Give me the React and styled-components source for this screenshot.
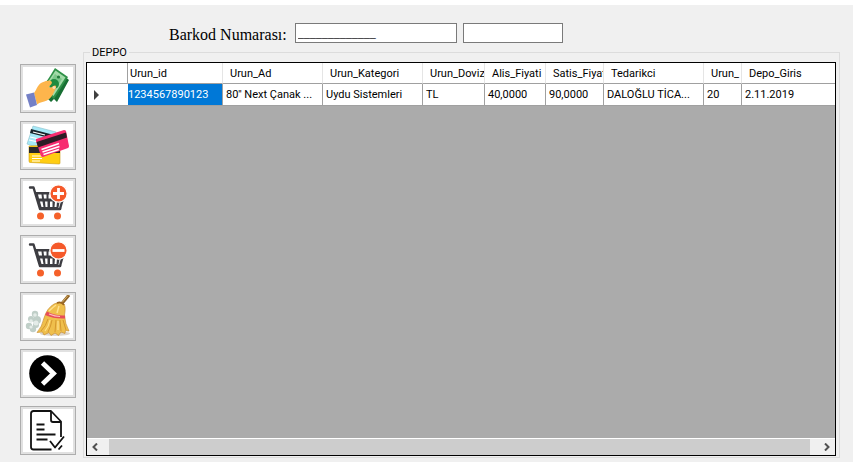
import React, { useState } from "react";
import styled, { createGlobalStyle } from "styled-components";

const columns = [
  { name: "Urun_id", width: 95 },
  { name: "Urun_Ad", width: 100 },
  { name: "Urun_Kategori", width: 100 },
  { name: "Urun_Doviz", width: 62 },
  { name: "Alis_Fiyati", width: 61 },
  { name: "Satis_Fiyat", width: 58 },
  { name: "Tedarikci", width: 100 },
  { name: "Urun_", width: 38 },
  { name: "Depo_Giris" },
];

const rows = [
  [
    "1234567890123",
    "80'' Next Çanak ...",
    "Uydu Sistemleri",
    "TL",
    "40,0000",
    "90,0000",
    "DALOĞLU TİCA...",
    "20",
    "2.11.2019",
  ],
];

const actions = [
  { label: "Nakit", Icon: CashIcon },
  { label: "Kredi kartı", Icon: CardsIcon },
  { label: "Sepete ekle", Icon: CartAddIcon },
  { label: "Sepetten çıkar", Icon: CartRemoveIcon },
  { label: "Temizle", Icon: BroomIcon },
  { label: "İleri", Icon: NextIcon },
  { label: "Onayla", Icon: DocumentIcon },
];

export default function App() {
  const [barcode, setBarcode] = useState("_____________");
  const [amount, setAmount] = useState("");

  return (
    <>
      <GlobalStyle />
      <Page>
        <SearchBar>
          <SearchLabel htmlFor="barcode">Barkod Numarası:</SearchLabel>
          <TextBox
            id="barcode"
            $width={162}
            value={barcode}
            onChange={(e) => setBarcode(e.target.value)}
          />
          <TextBox
            aria-label="Adet"
            $width={100}
            value={amount}
            onChange={(e) => setAmount(e.target.value)}
          />
        </SearchBar>
        <Content>
          <Sidebar>
            {actions.map(({ label, Icon }) => (
              <ActionButton key={label} type="button" aria-label={label}>
                <Icon />
              </ActionButton>
            ))}
          </Sidebar>
          <GroupBox>
            <GroupTitle>DEPPO</GroupTitle>
            <GridView>
              <GridBody>
                <Table>
                  <colgroup>
                    <Col $width={41} />
                    {columns.map((column) => (
                      <Col key={column.name} $width={column.width} />
                    ))}
                  </colgroup>
                  <thead>
                    <tr>
                      <CornerCell />
                      {columns.map((column) => (
                        <HeaderCell key={column.name} scope="col">
                          {column.name}
                        </HeaderCell>
                      ))}
                    </tr>
                  </thead>
                  <tbody>
                    {rows.map((row) => (
                      <tr key={row[0]}>
                        <RowMarker>
                          <svg width="5" height="10" viewBox="0 0 5 10">
                            <path d="M0 0L5 5L0 10Z" fill="#404040" />
                          </svg>
                        </RowMarker>
                        {row.map((value, index) => (
                          <Cell key={index} $selected={index === 0}>
                            {value}
                          </Cell>
                        ))}
                      </tr>
                    ))}
                  </tbody>
                </Table>
              </GridBody>
              <ScrollBar>
                <ScrollButton type="button" aria-label="Sola kaydır">
                  <svg width="6" height="8" viewBox="0 0 6 8">
                    <path d="M5 0.5L1.5 4L5 7.5" />
                  </svg>
                </ScrollButton>
                <ScrollThumb />
                <ScrollButton type="button" aria-label="Sağa kaydır" $end>
                  <svg width="6" height="8" viewBox="0 0 6 8">
                    <path d="M1 0.5L4.5 4L1 7.5" />
                  </svg>
                </ScrollButton>
              </ScrollBar>
            </GridView>
          </GroupBox>
        </Content>
      </Page>
    </>
  );
}

function CashIcon() {
  return (
    <Picture viewBox="0 0 50 43">
      <path d="M34 3L46 13L34 35L31 32L28 35L24 31L20 18Z" fill="#176f33" />
      <path d="M32 1L45 10L31 32L19 22Z" fill="#2f9148" />
      <path d="M32.500 3.500L42.500 10.500L30.500 29L21 21Z" fill="#a3dba9" />
      <path d="M32 7L39 12L30 26L23 21Z" fill="#7cc78a" />
      <circle cx="31" cy="17" r="5" fill="#1f8a3f" />
      <circle cx="35.500" cy="10" r="1.600" fill="#237a3c" />
      <path
        d="M11 26C14 22 15 17 19 15.500C23 14 27 12.500 28.500 14.500C30 16.500 27 18 26 20C28 22 30 18.500 32 18.500C34.500 19 32.500 22 31 25C29 29 28 31 24 33.500C20 35 17 35 14 37.500Z"
        fill="#fdb54c"
      />
      <circle cx="31" cy="20.500" r="1.500" fill="#ffdcb0" />
      <path d="M3 27.500L11 25.500L14 38L7 40.500Z" fill="#7480c6" />
    </Picture>
  );
}

function CardsIcon() {
  return (
    <Picture viewBox="0 0 50 43">
      <path d="M10 2L33 8L28 28L4 20Z" fill="#a5e8f7" stroke="#8bbfca" strokeWidth="0.6" />
      <path d="M8 5L31 11L30 15L7 9Z" fill="#17232a" />
      <path d="M10 8L22 11" stroke="#fff" strokeWidth="1.200" />
      <path d="M7 13L16 15M6 16L15 18" stroke="#fff" strokeWidth="1.200" />
      <path d="M6 22L37 21L37 39Q37 40 36 40L8 38.500Q6 39 6 37Z" fill="#ffcd12" stroke="#c99a10" strokeWidth="0.6" />
      <path d="M6 23L37 23V29L6 29Z" fill="#28292b" />
      <path d="M9 32H19M9 34.500H19M9 37H17" stroke="#fff" strokeWidth="1.200" />
      <path d="M13 15L41 6Q42.500 6 43 7L46 22Q46 23.500 45 24L20 33Q18.500 33 18 32L13 17Z" fill="#f72d70" />
      <path d="M13.500 18L43 8.500L44 13.500L15 23.500Z" fill="#2d1d26" />
      <path d="M18.500 25.500L36 19.500M19.500 28L36.500 22.500M20.500 30.500L36 25.500" stroke="#fff" strokeWidth="1.600" />
    </Picture>
  );
}

function Cart({ children }) {
  return (
    <Picture viewBox="0 0 50 43">
      <path
        d="M7 6.500H10.500L17 28H37"
        fill="none"
        stroke="#3d3d42"
        strokeWidth="2.400"
        strokeLinejoin="round"
        strokeLinecap="round"
      />
      <path d="M11.500 11H39L38 29H17Z" fill="#3d3d42" />
      <g fill="#fff">
        <path d="M15 13.500H18.500L19 17.500H16ZM20.500 13.500H23.500V17.500H21ZM25.500 13.500H28.500V17.500H25.500Z" />
        <path d="M17 20.500H19.500L20.500 26H18.500ZM22 20.500H24.500V26H22.500ZM27 20.500H29.500V26H27ZM32 20.500H34L33.500 26H31.500Z" />
        <path d="M36.500 21H41L38.500 27H35.500Z" />
      </g>
      <path d="M39.500 19L37 28" stroke="#3d3d42" strokeWidth="2.400" />
      <circle cx="17.500" cy="35" r="3.500" fill="#f5612a" />
      <circle cx="34.500" cy="35" r="3.500" fill="#f5612a" />
      <circle cx="35.500" cy="12.500" r="8.700" fill="#f5592a" stroke="#fff" strokeWidth="1.300" />
      {children}
    </Picture>
  );
}

function CartAddIcon() {
  return (
    <Cart>
      <path d="M30 12.500H41M35.500 7V18" stroke="#fff" strokeWidth="2.800" />
    </Cart>
  );
}

function CartRemoveIcon() {
  return (
    <Cart>
      <path d="M29.500 12.500H41.500" stroke="#fff" strokeWidth="2.800" />
    </Cart>
  );
}

function BroomIcon() {
  return (
    <Picture viewBox="0 0 50 43">
      <g fill="#c0cfc8">
        <circle cx="12" cy="19" r="3.200" />
        <circle cx="8" cy="24" r="3" />
        <circle cx="14" cy="25" r="4" />
        <circle cx="6" cy="31" r="3.200" />
        <circle cx="10" cy="34" r="3.200" />
        <circle cx="13" cy="30" r="3" />
      </g>
      <g fill="#e4ece8">
        <circle cx="12" cy="20" r="1.800" />
        <circle cx="8" cy="26" r="1.800" />
        <circle cx="13" cy="28" r="2.500" />
        <circle cx="8" cy="32" r="1.600" />
      </g>
      <ellipse cx="32" cy="38.500" rx="15" ry="2.500" fill="#ddd5cb" />
      <path d="M38.500 9L46 0" stroke="#8f6427" strokeWidth="3" />
      <path d="M39 7.500L45 0.500" stroke="#d8b066" strokeWidth="1" />
      <path
        d="M31 9Q36 6 41 9Q43 12 41.500 20Q42 29 46 36L42.500 35.500L42 38.500L38 37L35.500 40.500L32 38L28 40.500L26 37.500L21 40L19.500 37L14 37.500Q19 32 21 23Q24 13 31 9Z"
        fill="#efbf4c"
        stroke="#c28626"
        strokeWidth="0.600"
      />
      <path
        d="M25 24Q23 31 18 36M29 25Q28 31 25 37M33 25L32 37M37 25L38 36M40 25L43 35"
        fill="none"
        stroke="#d1932d"
        strokeWidth="0.900"
      />
      <path
        d="M27 25Q26 31 22 36M35 26L35 35"
        fill="none"
        stroke="#ffe08b"
        strokeWidth="1.200"
      />
      <path d="M33 10Q29 13 26 16M36 11L34 18" stroke="#ffe08b" strokeWidth="1.500" fill="none" />
      <path d="M24 16.500Q32 21 42 20.500L42 23.500Q31 24 22 20Z" fill="#e74d5b" />
      <path d="M26 19Q32 21.500 37 21.500" stroke="#ffc0c0" strokeWidth="1.200" fill="none" />
      <path d="M34 8Q38 6 41 10" stroke="#9b6623" strokeWidth="1.800" fill="none" />
    </Picture>
  );
}

function NextIcon() {
  return (
    <Picture viewBox="0 0 50 43">
      <circle cx="24.500" cy="21.500" r="18.300" fill="#000" />
      <path d="M19.500 11L30.500 21.500L19.500 32" fill="none" stroke="#fff" strokeWidth="4.800" />
    </Picture>
  );
}

function DocumentIcon() {
  return (
    <Picture viewBox="0 0 50 43">
      <g fill="none" stroke="#111" strokeWidth="1.800" strokeLinejoin="round">
        <path d="M28.500 40.500H10.500Q8 40.500 8 38V4.500Q8 2 10.500 2H28L38 12.500V28" />
        <path d="M28 2V11Q28 13 30 13H38" />
        <path d="M13.500 15.500H21.500M13.500 20.500H21.500M13.500 25.500H32.500M13.500 30.500H24.500" />
        <path d="M27 32L32 38.500L41 27.500M35.500 40.500L39 36.500" />
      </g>
    </Picture>
  );
}

const GlobalStyle = createGlobalStyle`
  * {
    box-sizing: border-box;
  }
  body {
    margin: 0;
    background: #f0f0f0;
    color: #000;
    font-family: Roboto, "Liberation Sans", Arial, sans-serif;
    font-size: 11px;
  }
`;

const Page = styled.div`
  border-top: 5px solid #fff;
  padding: 18px 13px 4px 20px;
`;

const SearchBar = styled.div`
  display: flex;
  align-items: center;
  gap: 6px;
  padding-left: 149px;
  margin-bottom: 3px;
`;

const SearchLabel = styled.label`
  margin: 4px 2px 0 0;
  font-family: "Liberation Serif", "Times New Roman", serif;
  font-size: 16px;
  line-height: 16px;
`;

const TextBox = styled.input`
  width: ${({ $width }) => $width}px;
  height: 20px;
  padding: 0 2px;
  border: 1px solid #7a7a7a;
  border-radius: 0;
  background: #fff;
  font-family: "Liberation Serif", "Times New Roman", serif;
  font-size: 12px;
`;

const Content = styled.div`
  display: flex;
  gap: 7px;
`;

const Sidebar = styled.div`
  display: flex;
  flex-direction: column;
  gap: 8px;
  padding: 18px 0 3px;
`;

const ActionButton = styled.button`
  width: 56px;
  height: 49px;
  padding: 0;
  border: 1px solid #adadad;
  background: #fff;
  box-shadow: inset 0 0 0 2px #e1e1e1;
  display: flex;
  align-items: center;
  justify-content: center;
`;

const Picture = styled.svg`
  display: block;
  width: 50px;
  height: 43px;
`;

const GroupBox = styled.fieldset`
  flex: 1;
  min-width: 0;
  margin: 0;
  padding: 3px 3px 1px 2px;
  border: 1px solid #dcdcdc;
  display: flex;
  flex-direction: column;
`;

const GroupTitle = styled.legend`
  margin-left: 4px;
  padding: 0 2px;
  font-size: 11px;
  line-height: 13px;
`;

const GridView = styled.div`
  flex: 1;
  display: flex;
  flex-direction: column;
  border: 1px solid #000;
  background: #ababab;
`;

const GridBody = styled.div`
  flex: 1;
  overflow: hidden;
`;

const Table = styled.table`
  width: 100%;
  table-layout: fixed;
  border-collapse: separate;
  border-spacing: 0;
  background: #fff;
`;

const Col = styled.col`
  width: ${({ $width }) => ($width ? `${$width}px` : "auto")};
`;

const CornerCell = styled.td`
  height: 21px;
  padding: 0;
  border-right: 1px solid #a0a0a0;
  border-bottom: 1px solid #a0a0a0;
`;

const HeaderCell = styled.th`
  height: 21px;
  padding: 0 0 0 7px;
  border-right: 1px solid #e5e5e5;
  border-bottom: 1px solid #a0a0a0;
  font-weight: normal;
  text-align: left;
  white-space: nowrap;
  overflow: hidden;

  &:nth-child(2) {
    padding-left: 2px;
  }
  &:last-child {
    border-right: none;
  }
`;

const RowMarker = styled.td`
  height: 22px;
  padding: 0 0 0 7px;
  border-bottom: 1px solid #a0a0a0;

  svg {
    display: block;
  }
`;

const Cell = styled.td`
  height: 22px;
  padding: 0 0 0 ${({ $selected }) => ($selected ? 0 : 3)}px;
  border-right: 1px solid #a0a0a0;
  border-bottom: 1px solid #a0a0a0;
  background: ${({ $selected }) => ($selected ? "#0078d7" : "#fff")};
  color: ${({ $selected }) => ($selected ? "#fff" : "#000")};
  white-space: nowrap;
  overflow: hidden;

  &:last-child {
    border-right: none;
  }
`;

const ScrollBar = styled.div`
  display: flex;
  height: 17px;
  border-top: 1px solid #fff;
  background: #f0f0f0;
`;

const ScrollButton = styled.button`
  display: flex;
  align-items: center;
  justify-content: ${({ $end }) => ($end ? "flex-end" : "flex-start")};
  width: ${({ $end }) => ($end ? 25 : 22)}px;
  padding: 0 5px;
  border: none;
  background: #f0f0f0;

  path {
    fill: none;
    stroke: #505050;
    stroke-width: 2;
  }
`;

const ScrollThumb = styled.div`
  flex: 1;
  background: #cdcdcd;
`;
